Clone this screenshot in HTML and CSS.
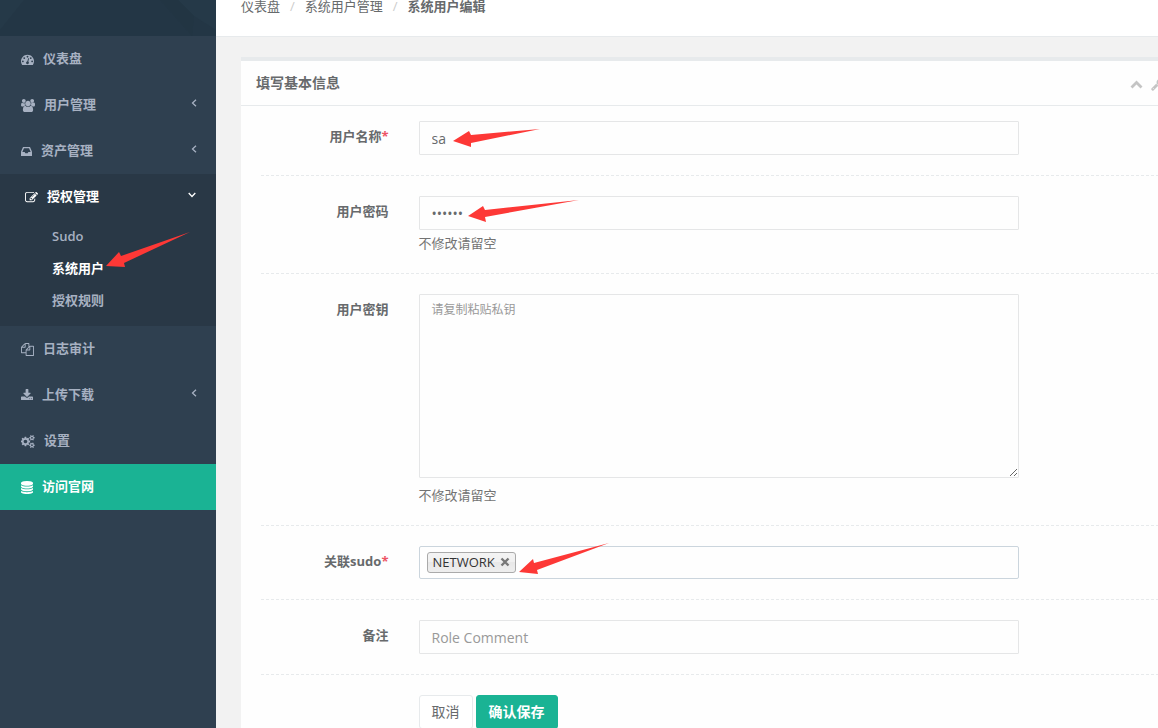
FILE: index.html
```html
<!DOCTYPE html>
<html lang="zh-CN">
<head>
<meta charset="utf-8">
<title>系统用户编辑</title>
<link rel="stylesheet" href="styles.css">
</head>
<body>
<div class="layout">
  <nav class="sidebar" aria-label="主菜单">
    <div class="sidebar-header">
      <svg viewBox="0 0 216 36" preserveAspectRatio="none" aria-hidden="true">
        <path fill="#253948" d="M0 0h24L0 30zM178 0h38v30l-22-14z"/>
        <path fill="#223543" d="M160 0h18l16 16-2 20z" opacity=".6"/>
      </svg>
    </div>
    <ul class="menu">
      <li><a class="menu-link" href="#"><svg class="icon" viewBox="0 0 1792 1792" width="13" height="13" aria-hidden="true"><path d="M384 1152q0-53-37.5-90.5t-90.5-37.5-90.5 37.5-37.5 90.5 37.5 90.5 90.5 37.5 90.5-37.5 37.5-90.5zm192-448q0-53-37.5-90.5t-90.5-37.5-90.5 37.5-37.5 90.5 37.5 90.5 90.5 37.5 90.5-37.5 37.5-90.5zm428 481l101-382q6-26-7.5-48.5t-38.5-29.5-48 6.5-30 39.5l-101 382q-60 5-107 43.5t-63 98.5q-20 77 20 146t117 89 146-20 89-117q16-60-6-117t-72-91zm660-33q0-53-37.5-90.5t-90.5-37.5-90.5 37.5-37.5 90.5 37.5 90.5 90.5 37.5 90.5-37.5 37.5-90.5zm-640-640q0-53-37.5-90.5t-90.5-37.5-90.5 37.5-37.5 90.5 37.5 90.5 90.5 37.5 90.5-37.5 37.5-90.5zm448 192q0-53-37.5-90.5t-90.5-37.5-90.5 37.5-37.5 90.5 37.5 90.5 90.5 37.5 90.5-37.5 37.5-90.5zm320 448q0 261-141 483-19 29-54 29h-1402q-35 0-54-29-141-221-141-483 0-182 71-348t191-286 286-191 348-71 348 71 286 191 191 286 71 348z"/></svg><span>仪表盘</span></a></li>
      <li><a class="menu-link" href="#"><svg class="icon" viewBox="64 0 1920 1792" width="14" height="13" aria-hidden="true"><path d="M657 896q-162 5-265 128h-134q-82 0-138-40.5t-56-118.5q0-353 124-353 6 0 43.5 21t97.5 42.5 119 21.5q67 0 133-23-5 37-5 66 0 159 90 299zm1071 637q0 120-73 189.5t-194 69.5h-874q-121 0-194-69.5t-73-189.5q0-53 3.5-103.5t14-109 26.5-108.5 43-97.5 62-81 85.5-53.5 111.5-20q10 0 43 21.5t73 48 107 48 135 21.5 135-21.5 107-48 73-48 43-21.5q61 0 111.5 20t85.5 53.5 62 81 43 97.5 26.5 108.5 14 109 3.5 103.5zm-1024-1277q0 106-75 181t-181 75-181-75-75-181 75-181 181-75 181 75 75 181zm704 384q0 159-112.5 271.5t-271.5 112.5-271.5-112.5-112.5-271.5 112.5-271.5 271.5-112.5 271.5 112.5 112.5 271.5zm576 225q0 78-56 118.5t-138 40.5h-134q-103-123-265-128 90-140 90-299 0-29-5-66 66 23 133 23 59 0 119-21.5t97.5-42.5 43.5-21q124 0 124 353zm-128-609q0 106-75 181t-181 75-181-75-75-181 75-181 181-75 181 75 75 181z"/></svg><span>用户管理</span><svg class="caret" viewBox="0 0 6 8" width="6" height="8" aria-hidden="true"><path d="M5 .7 1.5 4 5 7.3"/></svg></a></li>
      <li><a class="menu-link" href="#"><svg class="icon" viewBox="128 0 1536 1792" width="11" height="13" aria-hidden="true"><path d="M1151 960h316q-1-3-2.5-8t-2.5-8l-212-496h-708l-212 496q-1 2-2.5 8t-2.5 8h316l95 192h320zm513 30v482q0 26-19 45t-45 19h-1408q-26 0-45-19t-19-45v-482q0-62 25-123l238-552q10-25 36.5-42t52.5-17h832q26 0 52.5 17t36.5 42l238 552q25 61 25 123z"/></svg><span>资产管理</span><svg class="caret" viewBox="0 0 6 8" width="6" height="8" aria-hidden="true"><path d="M5 .7 1.5 4 5 7.3"/></svg></a></li>
      <li class="open">
        <a class="menu-link" href="#"><svg class="icon" viewBox="0 0 1792 1792" width="13" height="13" aria-hidden="true"><path d="M888 1184l116-116-152-152-116 116v56h96v96h56zm440-720q-16-16-33 1l-350 350q-17 17-1 33t33-1l350-350q17-17 1-33zm80 594v190q0 119-84.5 203.5t-203.5 84.5h-832q-119 0-203.5-84.5t-84.5-203.5v-832q0-119 84.5-203.5t203.5-84.5h832q63 0 117 25 15 7 18 23 3 17-9 29l-49 49q-14 14-32 8-23-6-45-6h-832q-66 0-113 47t-47 113v832q0 66 47 113t113 47h832q66 0 113-47t47-113v-126q0-13 9-22l64-64q15-15 35-7t20 29zm-96-738l288 288-672 672h-288v-288zm444 132l-92 92-288-288 92-92q28-28 68-28t68 28l152 152q28 28 28 68t-28 68z"/></svg><span>授权管理</span><svg class="caret" viewBox="0 0 8 6" width="8" height="6" aria-hidden="true"><path d="M.7 1 4 4.5 7.3 1"/></svg></a>
        <ul class="submenu">
          <li><a href="#">Sudo</a></li>
          <li><a class="current" href="#" aria-current="page">系统用户</a></li>
          <li><a href="#">授权规则</a></li>
        </ul>
      </li>
      <li><a class="menu-link" href="#"><svg class="icon" viewBox="0 0 1792 1792" width="13" height="13" aria-hidden="true"><path d="M1696 384q40 0 68 28t28 68v1216q0 40-28 68t-68 28h-960q-40 0-68-28t-28-68v-288h-544q-40 0-68-28t-28-68v-672q0-40 20-88t48-76l408-408q28-28 76-48t88-20h416q40 0 68 28t28 68v328q68-40 128-40h416zm-544 213l-299 299h299v-299zm-640-384l-299 299h299v-299zm196 647l316-316v-416h-384v416q0 40-28 68t-68 28h-416v640h512v-256q0-40 20-88t48-76zm956 804v-1152h-384v416q0 40-28 68t-68 28h-416v640h896z"/></svg><span>日志审计</span></a></li>
      <li><a class="menu-link" href="#"><svg class="icon" viewBox="64 0 1664 1792" width="12" height="13" aria-hidden="true"><path d="M1344 1344q0-26-19-45t-45-19-45 19-19 45 19 45 45 19 45-19 19-45zm256 0q0-26-19-45t-45-19-45 19-19 45 19 45 45 19 45-19 19-45zm128-224v320q0 40-28 68t-68 28h-1472q-40 0-68-28t-28-68v-320q0-40 28-68t68-28h465l135 136q58 56 136 56t136-56l136-136h464q40 0 68 28t28 68zm-325-569q17 41-14 70l-448 448q-18 19-45 19t-45-19l-448-448q-31-29-14-70 17-39 59-39h256v-448q0-26 19-45t45-19h256q26 0 45 19t19 45v448h256q42 0 59 39z"/></svg><span>上传下载</span><svg class="caret" viewBox="0 0 6 8" width="6" height="8" aria-hidden="true"><path d="M5 .7 1.5 4 5 7.3"/></svg></a></li>
      <li><a class="menu-link" href="#"><svg class="icon" viewBox="0 0 1856 1792" width="14" height="13" aria-hidden="true"><path d="M832 896q0-106-75-181t-181-75-181 75-75 181 75 181 181 75 181-75 75-181zm768 512q0-52-38-90t-90-38-90 38-38 90q0 53 37.5 90.5t90.5 37.5 90.5-37.5 37.5-90.5zm0-1024q0-52-38-90t-90-38-90 38-38 90q0 53 37.5 90.5t90.5 37.5 90.5-37.5 37.5-90.5zm-384 421v185q0 10-7 19.5t-16 10.5l-155 24q-11 35-32 76 34 48 90 115 7 11 7 20 0 12-7 19-23 30-82.5 89.5t-78.5 59.5q-11 0-21-7l-115-90q-37 19-77 31-11 108-23 155-7 24-30 24h-186q-11 0-20-7.5t-10-17.5l-23-153q-34-10-75-31l-118 89q-7 7-20 7-11 0-21-8-144-133-144-160 0-9 7-19 10-14 41-53t47-61q-23-44-35-82l-152-24q-10-1-17-9.5t-7-19.5v-185q0-10 7-19.5t16-10.5l155-24q11-35 32-76-34-48-90-115-7-11-7-20 0-12 7-20 22-30 82-89t79-59q11 0 21 7l115 90q34-18 77-32 11-108 23-154 7-24 30-24h186q11 0 20 7.5t10 17.5l23 153q34 10 75 31l118-89q8-7 20-7 11 0 21 8 144 133 144 160 0 8-7 19-12 16-42 54t-45 60q23 48 34 82l152 23q10 2 17 10.5t7 19.5zm640 533v140q0 16-149 31-12 27-30 52 51 113 51 138 0 4-4 7-122 71-124 71-8 0-46-47t-52-68q-20 2-30 2t-30-2q-14 21-52 68t-46 47q-2 0-124-71-4-3-4-7 0-25 51-138-18-25-30-52-149-15-149-31v-140q0-16 149-31 13-29 30-52-51-113-51-138 0-4 4-7 4-2 35-20t59-34 30-16q8 0 46 46.5t52 67.5q20-2 30-2t30 2q51-71 92-112l6-2q4 0 124 70 4 3 4 7 0 25-51 138 17 23 30 52 149 15 149 31zm0-1024v140q0 16-149 31-12 27-30 52 51 113 51 138 0 4-4 7-122 71-124 71-8 0-46-47t-52-68q-20 2-30 2t-30-2q-14 21-52 68t-46 47q-2 0-124-71-4-3-4-7 0-25 51-138-18-25-30-52-149-15-149-31v-140q0-16 149-31 13-29 30-52-51-113-51-138 0-4 4-7 4-2 35-20t59-34 30-16q8 0 46 46.5t52 67.5q20-2 30-2t30 2q51-71 92-112l6-2q4 0 124 70 4 3 4 7 0 25-51 138 17 23 30 52 149 15 149 31z"/></svg><span>设置</span></a></li>
      <li class="featured"><a class="menu-link" href="#"><svg class="icon" viewBox="128 0 1536 1792" width="12" height="13" preserveAspectRatio="none" aria-hidden="true"><path d="M896 768q237 0 443-43t325-127v170q0 69-103 128t-280 93.5-385 34.5-385-34.5-280-93.5-103-128v-170q119 84 325 127t443 43zm0 768q237 0 443-43t325-127v170q0 69-103 128t-280 93.5-385 34.5-385-34.5-280-93.5-103-128v-170q119 84 325 127t443 43zm0-384q237 0 443-43t325-127v170q0 69-103 128t-280 93.5-385 34.5-385-34.5-280-93.5-103-128v-170q119 84 325 127t443 43zm0-1152q208 0 385 34.5t280 93.5 103 128v128q0 69-103 128t-280 93.5-385 34.5-385-34.5-280-93.5-103-128v-128q0-69 103-128t280-93.5 385-34.5z"/></svg><span>访问官网</span></a></li>
    </ul>
  </nav>

  <main class="main">
    <header class="page-heading">
      <ol class="breadcrumb">
        <li><a href="#">仪表盘</a></li>
        <li><a href="#">系统用户管理</a></li>
        <li><strong>系统用户编辑</strong></li>
      </ol>
    </header>

    <section class="panel">
      <header class="panel-title">
        <h1>填写基本信息</h1>
        <div class="panel-tools">
          <button type="button" aria-label="收起"><svg viewBox="0 0 13 13" width="13" height="13" aria-hidden="true"><path class="stroke" d="M1.5 9.5 6.5 4.5 11.5 9.5"/></svg></button>
          <button type="button" aria-label="工具"><svg viewBox="64 0 1664 1792" width="12" height="13" aria-hidden="true"><path d="M448 1472q0-26-19-45t-45-19-45 19-19 45 19 45 45 19 45-19 19-45zm644-420l-682 682q-37 37-90 37-52 0-91-37l-106-108q-38-36-38-90 0-53 38-91l681-681q39 98 114.5 173.5t173.5 114.5zm634-435q0 39-23 106-47 134-164.5 217.5t-258.5 83.5q-185 0-316.5-131.5t-131.5-316.5 131.5-316.5 316.5-131.5q58 0 121.5 16.5t107.5 46.5q16 11 16 28t-16 28l-293 169v224l193 107q5-3 79-48.5t135.5-81 70.5-35.5q15 0 23.5 10t8.5 25z"/></svg></button>
          <button type="button" aria-label="关闭"><svg viewBox="0 0 10 13" width="10" height="13" aria-hidden="true"><path class="stroke" d="M1.5 3 8.5 10M8.5 3 1.5 10"/></svg></button>
        </div>
      </header>

      <form class="panel-body">
        <div class="field">
          <label for="name">用户名称<span class="required">*</span></label>
          <div class="control"><input class="text-input" id="name" type="text" value="sa"></div>
        </div>
        <hr>
        <div class="field">
          <label for="password">用户密码</label>
          <div class="control">
            <input class="text-input" id="password" type="password" value="secret" autocomplete="off">
            <p class="help">不修改请留空</p>
          </div>
        </div>
        <hr>
        <div class="field">
          <label for="key">用户密钥</label>
          <div class="control">
            <textarea class="text-input key-input" id="key" placeholder="请复制粘贴私钥"></textarea>
            <p class="help">不修改请留空</p>
          </div>
        </div>
        <hr>
        <div class="field">
          <label for="sudo">关联sudo<span class="required">*</span></label>
          <div class="control">
            <div class="tag-input">
              <span class="tag">NETWORK<button type="button" aria-label="移除 NETWORK"><svg viewBox="0 0 10 10" width="10" height="10" aria-hidden="true"><path d="M1.5 1.5l7 7M8.5 1.5l-7 7"/></svg></button></span>
              <input id="sudo" type="text" autocomplete="off">
            </div>
          </div>
        </div>
        <hr>
        <div class="field">
          <label for="comment">备注</label>
          <div class="control"><input class="text-input" id="comment" type="text" placeholder="Role Comment"></div>
        </div>
        <hr>
        <div class="field">
          <div class="control actions">
            <button class="btn" type="reset">取消</button>
            <button class="btn btn-primary" type="submit">确认保存</button>
          </div>
        </div>
      </form>
    </section>
  </main>

  <svg class="annotations" width="620" height="600" viewBox="0 0 620 600" aria-hidden="true">
    <path d="M106 266 119 252 121 256 190 232 124 263 125 267z"/>
    <path d="M453 141 469 131 471 135 540 129 471 143 471 147z"/>
    <path d="M468 216 483 206 485 210 579 200 485 217 486 222z"/>
    <path d="M519 572 533 559 534 563 609 543 537 570 538 574z"/>
  </svg>
</div>
</body>
</html>
```

FILE: styles.css
```css
* {
  box-sizing: border-box;
}

body {
  margin: 0;
  background: #2f4050;
  color: #676a6c;
  font: 13px/18px "Open Sans", "Noto Sans CJK SC", sans-serif;
}

ul,
ol {
  margin: 0;
  padding: 0;
  list-style: none;
}

a {
  color: inherit;
  text-decoration: none;
}

button,
input,
textarea {
  font: inherit;
  color: inherit;
}

.layout {
  position: relative;
  display: flex;
  height: 100vh;
  overflow: hidden;
}

/* Sidebar */
.sidebar {
  flex: 0 0 216px;
  color: #a7b1c2;
  font-weight: 600;
}

.sidebar-header {
  height: 36px;
  background: #233645;
}

.sidebar-header svg {
  display: block;
  width: 100%;
  height: 100%;
}

.menu-link {
  display: flex;
  align-items: center;
  gap: 9px;
  padding: 13px 19px 15px 21px;
}

.icon {
  fill: currentColor;
  margin-top: 2px;
}

.caret {
  margin-left: auto;
  margin-bottom: 2px;
  fill: none;
  stroke: currentColor;
  stroke-width: 1.3;
}

.open {
  background: #293846;
}

.open > .menu-link {
  padding-right: 20px;
  padding-left: 25px;
  color: #fff;
}

.submenu {
  padding-bottom: 10px;
}

.submenu a {
  display: block;
  padding: 7px 10px 7px 52px;
}

.submenu .current {
  color: #fff;
}

.featured {
  background: #1ab394;
  color: #fff;
}

/* Page */
.main {
  flex: 1;
  min-width: 0;
  background: #f2f2f2;
}

.page-heading {
  padding: 0 25px 23px;
  background: #fff;
  border-bottom: 1px solid #e7eaec;
}

.breadcrumb {
  display: flex;
  line-height: 13px;
}

.breadcrumb li + li::before {
  content: "/";
  padding: 0 10px;
  color: #ccc;
}

.panel {
  margin: 20px -38px 0 25px;
  background: #fefefe;
  border-top: 4px solid #e7eaec;
}

.panel-title {
  display: flex;
  align-items: center;
  justify-content: space-between;
  padding: 13px 15px;
  border-bottom: 1px solid #e7eaec;
}

.panel-title h1 {
  margin: 0;
  font-size: 14px;
  font-weight: 600;
}

.panel-tools {
  display: flex;
  gap: 8px;
  color: #c4c4c4;
}

.panel-tools button {
  padding: 2px 0 0;
  border: 0;
  background: none;
}

.panel-tools svg {
  display: block;
  fill: currentColor;
}

.panel-tools .stroke {
  fill: none;
  stroke: currentColor;
  stroke-width: 2.8;
}

/* Form */
.panel-body {
  padding: 15px 20px 20px;
}

.panel-body hr {
  height: 1px;
  margin: 20px 0;
  border: 0;
  background: repeating-linear-gradient(90deg, #e7eaec 0 3px, transparent 3px 5px);
}

.field {
  display: grid;
  grid-template-columns: minmax(0, 2fr) minmax(0, 8fr) minmax(0, 2fr);
  margin: 0 -15px;
}

.field label {
  padding: 6px 15px 0;
  text-align: right;
  font-weight: 700;
}

.required {
  color: #ed5565;
}

.control {
  grid-column: 2;
  padding: 0 15px;
}

.text-input {
  display: block;
  width: 100%;
  height: 34px;
  padding: 6px 12px;
  border: 1px solid #e5e6e7;
  border-radius: 1px;
  background: #fefefe;
  font-size: 14px;
  line-height: 20px;
  outline: 0;
}

.text-input::placeholder {
  color: #999;
}

.key-input {
  height: 184px;
  padding-top: 5px;
  font-size: 12px;
  resize: both;
}

.help {
  margin: 4px 0 0;
  padding-bottom: 1px;
  color: #737373;
}

.key-input + .help {
  margin-top: 8px;
}

.tag-input {
  display: flex;
  align-items: center;
  height: 33px;
  padding: 0 7px;
  border: 1px solid #cbd5dd;
  border-radius: 2px;
  background: #fefefe;
}

.tag-input input {
  flex: 1;
  min-width: 0;
  border: 0;
  background: none;
  outline: 0;
}

.tag {
  display: flex;
  align-items: center;
  gap: 5px;
  height: 21px;
  padding: 0 5px 1px;
  border: 1px solid #aaa;
  border-radius: 3px;
  background: linear-gradient(#f4f4f4, #f0f0f0 50%, #e8e8e8 50%, #eee);
  color: #333;
}

.tag button {
  padding: 0;
  border: 0;
  background: none;
}

.tag svg {
  display: block;
  stroke: #777;
  stroke-width: 2.4;
}

.actions {
  display: flex;
  gap: 3px;
}

.btn {
  height: 34px;
  padding: 6px 12px;
  border: 1px solid #e7eaec;
  border-radius: 3px;
  background: #fff;
  font-size: 14px;
  line-height: 20px;
}

.btn-primary {
  border-color: #1ab394;
  background: #1ab394;
  color: #fff;
  font-weight: 600;
}

/* Pointer arrows drawn over the page */
.annotations {
  position: absolute;
  top: 0;
  left: 0;
  fill: #fd3836;
  pointer-events: none;
}
```
